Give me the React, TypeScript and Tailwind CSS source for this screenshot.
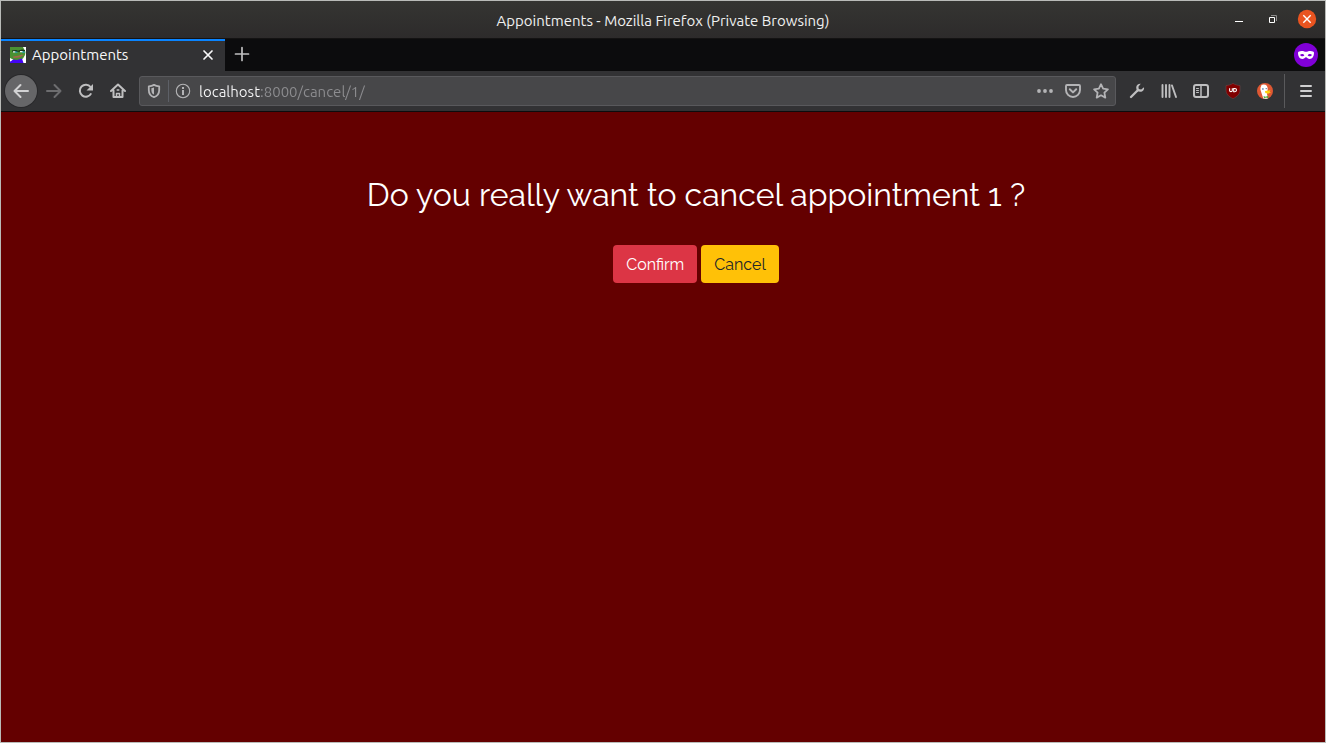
import type { ReactNode } from "react";

type IconButtonProps = {
  label: string;
  className?: string;
  children: ReactNode;
};

function IconButton({ label, className = "text-[#bfbfc0]", children }: IconButtonProps) {
  return (
    <button
      type="button"
      aria-label={label}
      className={`flex h-8 w-8 shrink-0 items-center justify-center ${className}`}
    >
      {children}
    </button>
  );
}

function Glyph({ children, className = "" }: { children: ReactNode; className?: string }) {
  return (
    <svg
      viewBox="0 0 16 16"
      className={`h-4 w-4 shrink-0 ${className}`}
      fill="none"
      stroke="currentColor"
      strokeWidth="2"
      strokeLinecap="round"
      strokeLinejoin="round"
      aria-hidden="true"
    >
      {children}
    </svg>
  );
}

function TitleBar() {
  return (
    <header className="grid h-[38px] shrink-0 grid-cols-[1fr_auto_1fr] items-center border-b border-[#141313] bg-linear-to-b from-[#353532] to-[#2d2b2b] text-[15px] text-[#f0f0f0]">
      <span />
      <h1 className="pt-[2px] leading-[22px]">Appointments - Mozilla Firefox (Private Browsing)</h1>
      <div className="flex items-center justify-end gap-[14px] pr-2 pb-[2px]">
        <button type="button" aria-label="Minimize" className="flex h-5 w-5 items-center justify-center">
          <svg viewBox="0 0 20 20" className="h-5 w-5" aria-hidden="true">
            <path d="M6 12h8v1H6z" fill="#fff" />
          </svg>
        </button>
        <button type="button" aria-label="Restore" className="flex h-5 w-5 items-center justify-center">
          <svg viewBox="0 0 20 20" className="h-5 w-5" fill="none" aria-hidden="true">
            <path d="M8 6.500h5.500V12" stroke="#8d8c8b" />
            <path d="M6.500 8.500h5v5h-5z" stroke="#fff" />
          </svg>
        </button>
        <button type="button" aria-label="Close window" className="flex h-5 w-5 items-center justify-center">
          <svg viewBox="0 0 20 20" className="h-5 w-5" aria-hidden="true">
            <circle cx="10" cy="10" r="9.200" fill="#e95420" />
            <path d="M6.300 6.300l7.400 7.400M13.700 6.300l-7.400 7.400" stroke="#fff" strokeWidth="1.400" />
          </svg>
        </button>
      </div>
    </header>
  );
}

function Favicon() {
  return (
    <svg viewBox="0 0 16 16" className="h-4 w-4 shrink-0" aria-hidden="true">
      <path d="M0 0h16v16H0z" fill="#fff" />
      <path d="M0 0h13l1 2 1.500 3-.5 3-2 3.500-3 1.500H4L0 12z" fill="#4a9132" />
      <path d="M0 14.500L3 12.500l4 .5 5-1.500 1.500 4.500H0z" fill="#4405f5" />
      <path d="M0 11l3 1.500-3 2z" fill="#fff" />
      <path d="M2 3.500L6 3l2 .8L12 2.500l3 .500v1.200l-7 .6L7 5 2 4.600z" fill="#17321a" />
      <path d="M3 4.200h2.500v1.200H3zM10 4h3v1.200h-3z" fill="#e8f6f6" />
      <path d="M5 4.600h2.500v1.200H5zM12 4.500h3v1.200h-3z" fill="#2aa4b4" />
      <path d="M3 9.500l5-.7 4-1.300 1.500.8-4 2.200-6 .5z" fill="#a3674b" />
    </svg>
  );
}

function TabStrip() {
  return (
    <div className="flex h-8 shrink-0 items-stretch bg-[#0c0c0d]">
      <div className="flex w-56 items-center border-t-2 border-[#0a84ff] bg-[#323234] pr-2 pb-[2px] pl-[9px] text-[15px] text-[#f9f9fa]">
        <Favicon />
        <span className="ml-[6px] flex-1 leading-5">Appointments</span>
        <button type="button" aria-label="Close tab" className="flex h-[18px] w-[18px] items-center justify-center">
          <Glyph>
            <path d="M4 4l8 8M12 4l-8 8" strokeWidth="1.700" />
          </Glyph>
        </button>
      </div>
      <IconButton label="Open a new tab" className="ml-px pb-[2px] text-[#bfbfc0]">
        <Glyph>
          <path d="M8 1.500v13M1.500 8h13" strokeWidth="1.700" />
        </Glyph>
      </IconButton>
      <div className="ml-auto flex items-center pr-[7px]">
        <svg viewBox="0 0 24 24" className="h-6 w-6" role="img" aria-label="Private browsing">
          <circle cx="12" cy="12" r="12" fill="#8000d7" />
          <path
            fill="#fff"
            fillRule="evenodd"
            d="M4 9.800C4 8.700 5.500 8 7.700 8c2 0 3.200.8 4.300.8S14.300 8 16.300 8c2.200 0 3.700.7 3.700 1.800 0 3.500-1.700 6.200-4.300 6.200-1.800 0-2.600-1.800-3.700-1.800S10.100 16 8.300 16C5.700 16 4 13.300 4 9.800zm2 2.200c.6.900 1.400 1.300 2.300 1.300 1 0 1.700-.5 2-1.100-.5-.8-1.300-1.300-2.200-1.300-.9 0-1.600.4-2.100 1.100zm7.700.2c.3.600 1 1.100 2 1.100.9 0 1.700-.4 2.300-1.300-.5-.7-1.200-1.100-2.100-1.100-.9 0-1.700.5-2.200 1.300z"
          />
        </svg>
      </div>
    </div>
  );
}

function AddressBar() {
  return (
    <div className="flex h-[30px] min-w-0 flex-1 items-center rounded-[3px] border border-[#59595c] bg-[#474749] text-[#b4b4b6]">
      <button type="button" aria-label="Tracking protection" className="flex h-7 w-7 shrink-0 items-center justify-center">
        <Glyph>
          <path d="M8 1.900c1.600.9 3.300 1.300 5.200 1.400v3.600c0 3.800-1.800 6.100-5.200 7.200-3.400-1.100-5.200-3.400-5.200-7.200V3.300C4.700 3.200 6.400 2.800 8 1.900z" strokeWidth="1.800" />
          <path d="M8 4.600v7c-1.800-.9-2.600-2.300-2.600-4.400V5.300z" fill="currentColor" stroke="none" />
        </Glyph>
      </button>
      <span className="h-[22px] w-px bg-[#5d6067]" />
      <button type="button" aria-label="Site information" className="flex h-7 w-7 shrink-0 items-center justify-center">
        <Glyph>
          <circle cx="8" cy="8" r="6.700" strokeWidth="1.100" />
          <path d="M7 7h2v5H7zM7 4h2v2H7z" fill="currentColor" stroke="none" />
        </Glyph>
      </button>
      <input
        type="text"
        aria-label="Address"
        defaultValue="localhost:8000/cancel/1/"
        className="ml-[2px] h-6 min-w-0 flex-1 bg-[linear-gradient(to_right,#f9f9fa_61px,#8d8d90_61px)] bg-clip-text text-[15px] text-transparent outline-none"
      />
      <div className="flex items-center">
        <button type="button" aria-label="Page actions" className="flex h-7 w-7 items-center justify-center">
          <Glyph>
            <g fill="currentColor" stroke="none">
              <circle cx="2" cy="8" r="1.900" />
              <circle cx="8" cy="8" r="1.900" />
              <circle cx="14" cy="8" r="1.900" />
            </g>
          </Glyph>
        </button>
        <button type="button" aria-label="Save to Pocket" className="flex h-7 w-7 items-center justify-center">
          <Glyph>
            <path d="M2 2h12a1 1 0 0 1 1 1v4a7 7 0 0 1-14 0V3a1 1 0 0 1 1-1z" strokeWidth="1.900" />
            <path d="M4.800 6.200L8 9.400l3.200-3.200" />
          </Glyph>
        </button>
        <button type="button" aria-label="Bookmark this page" className="flex h-7 w-7 items-center justify-center">
          <Glyph>
            <path
              d="M8 1.200l2.100 4.400 4.800.7-3.500 3.400.9 4.900L8 12.300l-4.300 2.300.9-4.900L1.100 6.300l4.800-.7z"
              strokeWidth="1.800"
            />
          </Glyph>
        </button>
      </div>
    </div>
  );
}

function NavBar() {
  return (
    <nav className="flex h-[41px] shrink-0 items-center border-b border-[#0c0c0d] bg-[#323234] pr-[3px] pl-1">
      <IconButton label="Back" className="rounded-full bg-[#666668] text-[#d2d2d3] ring-1 ring-[#29292b]">
        <Glyph>
          <path d="M15 8H1.500M7.500 2L1.500 8l6 6" />
        </Glyph>
      </IconButton>
      <IconButton label="Forward" className="ml-px text-[#6d6d6f]">
        <Glyph>
          <path d="M1 8h13.500M8.500 2l6 6-6 6" />
        </Glyph>
      </IconButton>
      <IconButton label="Reload">
        <Glyph>
          <path d="M13.200 10.400A6 6 0 1 1 12.600 4" strokeLinecap="butt" />
          <path d="M15 1v6.500H8.500z" fill="currentColor" stroke="none" />
        </Glyph>
      </IconButton>
      <IconButton label="Home">
        <Glyph>
          <path d="M1 8l7-6.500L15 8M3.500 7.500V14h9V7.500" />
          <path d="M6.500 14v-3.500h3V14M7.200 7h1.600" strokeWidth="1.500" />
        </Glyph>
      </IconButton>
      <div className="ml-[5px] flex min-w-0 flex-1">
        <AddressBar />
      </div>
      <div className="ml-[5px] flex items-center">
        <IconButton label="Developer tools">
          <Glyph>
            <path d="M2 14l6.500-6.500" strokeWidth="2.300" />
            <path
              d="M15 4.200l-2.800 2.200-2.400-.4-.4-2.300 2.300-2.900C9.400.6 7.200 2.200 7.200 4.700c0 2.400 1.900 4.200 4.200 4.100 2.400-.100 4.100-2.200 3.600-4.600z"
              fill="currentColor"
              stroke="none"
            />
          </Glyph>
        </IconButton>
        <IconButton label="Library">
          <Glyph>
            <path d="M1.500 2v12M5 2v12M8.500 2v12M11 2.500l4 11.500" strokeWidth="1.900" />
          </Glyph>
        </IconButton>
        <IconButton label="Sidebars">
          <Glyph>
            <rect x="1" y="2" width="14" height="12" rx="2" />
            <path d="M8 2v12" strokeWidth="1.500" />
            <path d="M3.500 5.500h2M3.500 7.500h2M3.500 9.500h2" strokeWidth="1" />
          </Glyph>
        </IconButton>
        <IconButton label="uBlock Origin">
          <svg viewBox="0 0 16 16" className="h-4 w-4" aria-hidden="true">
            <path d="M8 .3c2 1.500 4.500 2 7 2.200V7c0 4-2.600 6.500-7 8.700C3.600 13.500 1 11 1 7V2.500C3.500 2.300 6 1.800 8 .3z" fill="#800000" stroke="#6b4546" strokeWidth=".6" />
            <path d="M4.600 5.200v2.200c0 1.600 2.700 1.600 2.700 0V5.200" fill="none" stroke="#fff" strokeWidth="1.100" />
            <path d="M8.700 5.500h1.200a1.600 1.600 0 0 1 0 3.200H8.700z" fill="none" stroke="#fff" strokeWidth="1.100" />
          </svg>
        </IconButton>
        <IconButton label="DuckDuckGo">
          <svg viewBox="0 0 16 16" className="h-4 w-4" aria-hidden="true">
            <circle cx="8" cy="8" r="8" fill="#de5833" />
            <path d="M4 3.500L4.500 2 6.500 1.500c3 0 4.300 2 4.200 4.500L10 11l1 4.200c-1.500.6-3 .7-4.700.2L4 8.500C3.200 6 3.300 5 4 3.500z" fill="#fff" />
            <circle cx="5.900" cy="6" r=".8" fill="#2d4f8e" />
            <circle cx="9.200" cy="5.600" r=".6" fill="#2d4f8e" />
            <path d="M8 8l5.500-.7-1 1.500 1.500.5-3 1.500L8.300 10z" fill="#fdd20a" />
            <path d="M6.500 13l2.200.8 2.500-1v2.400L9 14.500l-2 1z" fill="#55ae3a" />
          </svg>
        </IconButton>
      </div>
      <span className="ml-[3px] h-[34px] w-px bg-[#5a5a5c]" />
      <IconButton label="Open menu" className="ml-[5px] text-[#d0d0d1]">
        <Glyph>
          <path d="M3 3h10M3 8h10M3 13h10" />
        </Glyph>
      </IconButton>
    </nav>
  );
}

function CancelPage() {
  return (
    <main className="flex flex-1 flex-col items-center bg-[#640000] pt-[63px] pl-[66px] font-['Raleway','Lato',sans-serif] font-normal">
      <h2 className="text-center text-[32px] leading-10 text-white">
        Do you really want to cancel appointment 1 ?
      </h2>
      <div className="mt-[30px] flex gap-1">
        <button type="button" className="h-[38px] rounded bg-[#dc3545] px-[13px] pt-[2px] text-white">
          Confirm
        </button>
        <button type="button" className="h-[38px] rounded bg-[#ffc107] px-[13px] pt-[2px] text-[#212529]">
          Cancel
        </button>
      </div>
    </main>
  );
}

export default function App() {
  return (
    <div className="flex min-h-screen flex-col border border-[#b9bbb8] bg-[#640000] font-['Ubuntu','Noto_Sans',sans-serif]">
      <TitleBar />
      <TabStrip />
      <NavBar />
      <CancelPage />
    </div>
  );
}
